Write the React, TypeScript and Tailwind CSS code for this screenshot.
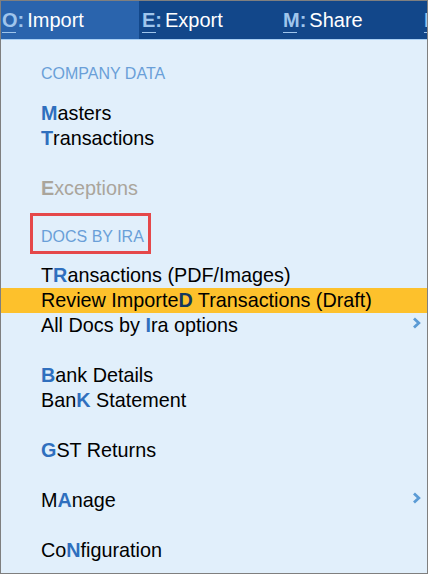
import React from "react";

type Part = [string, boolean?];

const Chevron = () => (
  <svg width="9" height="12" viewBox="0 0 9 12" className="mt-[4px]">
    <polyline
      points="2,1.5 6.8,6 2,10.5"
      fill="none"
      stroke="#5b9bd5"
      strokeWidth="2.8"
      strokeLinejoin="miter"
    />
  </svg>
);

function Label({ parts, keyClass }: { parts: Part[]; keyClass: string }) {
  return (
    <span className="whitespace-pre">
      {parts.map(([t, k], i) =>
        k ? (
          <b key={i} className={`font-bold ${keyClass}`}>
            {t}
          </b>
        ) : (
          <span key={i}>{t}</span>
        )
      )}
    </span>
  );
}

function Item({
  parts,
  highlight,
  sub,
  muted,
}: {
  parts: Part[];
  highlight?: boolean;
  sub?: boolean;
  muted?: boolean;
}) {
  const keyClass = highlight
    ? "text-[#14375e]"
    : muted
    ? "text-[#aaa59b]"
    : "text-[#2f6fbe]";
  return (
    <div
      className={`h-[25px] leading-[25px] pl-[40px] pr-[6px] flex justify-between text-[19.8px] ${
        muted ? "text-[#aaa59b]" : "text-black"
      } ${highlight ? "bg-[#fdc12c]" : ""}`}
    >
      <Label parts={parts} keyClass={keyClass} />
      {sub && <Chevron />}
    </div>
  );
}

const Gap = () => <div className="h-[25px]" />;

function Tab({
  k,
  label,
  active,
  first,
}: {
  k: string;
  label: string;
  active?: boolean;
  first?: boolean;
}) {
  return (
    <div
      className={`${first ? "w-[138px] pl-[1px]" : "w-[141px] pl-[3px]"} shrink-0 h-full leading-[38px] text-[20px] whitespace-nowrap ${
        active ? "bg-[#2a64ad]" : ""
      }`}
    >
      <span className="relative inline-block font-bold text-[#9fc5ec]">
        {k}
        <span className="absolute left-0 top-[31px] w-[14px] h-px bg-[#9fc5ec]" />
      </span>
      <b className="font-bold text-[#9fc5ec]">:</b>
      <span className="ml-[3px] text-white">{label}</span>
    </div>
  );
}

export default function App() {
  return (
    <div className="w-[428px] h-[574px] border border-[#7f7f7f] bg-[#e1effb] flex flex-col overflow-hidden font-['Liberation_Sans',Arial,sans-serif]">
      <div className="h-[39px] shrink-0 bg-[#12478a] border-b border-[#a9d0f5] flex overflow-hidden">
        <Tab k="O" label="Import" active first />
        <Tab k="E" label="Export" />
        <Tab k="M" label="Share" />
        <Tab k="F" label="Help" />
      </div>

      <div className="flex-1 pt-[21px]">
        <div className="h-[25px] leading-[25px] pl-[40px] text-[16px] text-[#6a9fd8]">
          COMPANY DATA
        </div>
        <div className="mt-[15px]">
          <Item parts={[["M", true], ["asters"]]} />
          <Item parts={[["T", true], ["ransactions"]]} />
          <Gap />
          <Item parts={[["E", true], ["xceptions"]]} muted />
        </div>

        <div className="relative mt-[23px] h-[25px] leading-[25px] pl-[40px] text-[16px] text-[#6a9fd8]">
          DOCS BY IRA
          <span className="absolute left-[29px] top-[-11px] w-[121px] h-[41px] border-[3px] border-[#e5484a]" />
        </div>

        <div className="mt-[14px]">
          <Item parts={[["T"], ["R", true], ["ansactions (PDF/Images)"]]} />
          <Item
            parts={[["Review Importe"], ["D", true], [" Transactions (Draft)"]]}
            highlight
          />
          <Item parts={[["All Docs by "], ["I", true], ["ra options"]]} sub />
          <Gap />
          <Item parts={[["B", true], ["ank Details"]]} />
          <Item parts={[["Ban"], ["K", true], [" Statement"]]} />
          <Gap />
          <Item parts={[["G", true], ["ST Returns"]]} />
          <Gap />
          <Item parts={[["M"], ["A", true], ["nage"]]} sub />
          <Gap />
          <Item parts={[["Co"], ["N", true], ["figuration"]]} />
        </div>
      </div>
    </div>
  );
}
